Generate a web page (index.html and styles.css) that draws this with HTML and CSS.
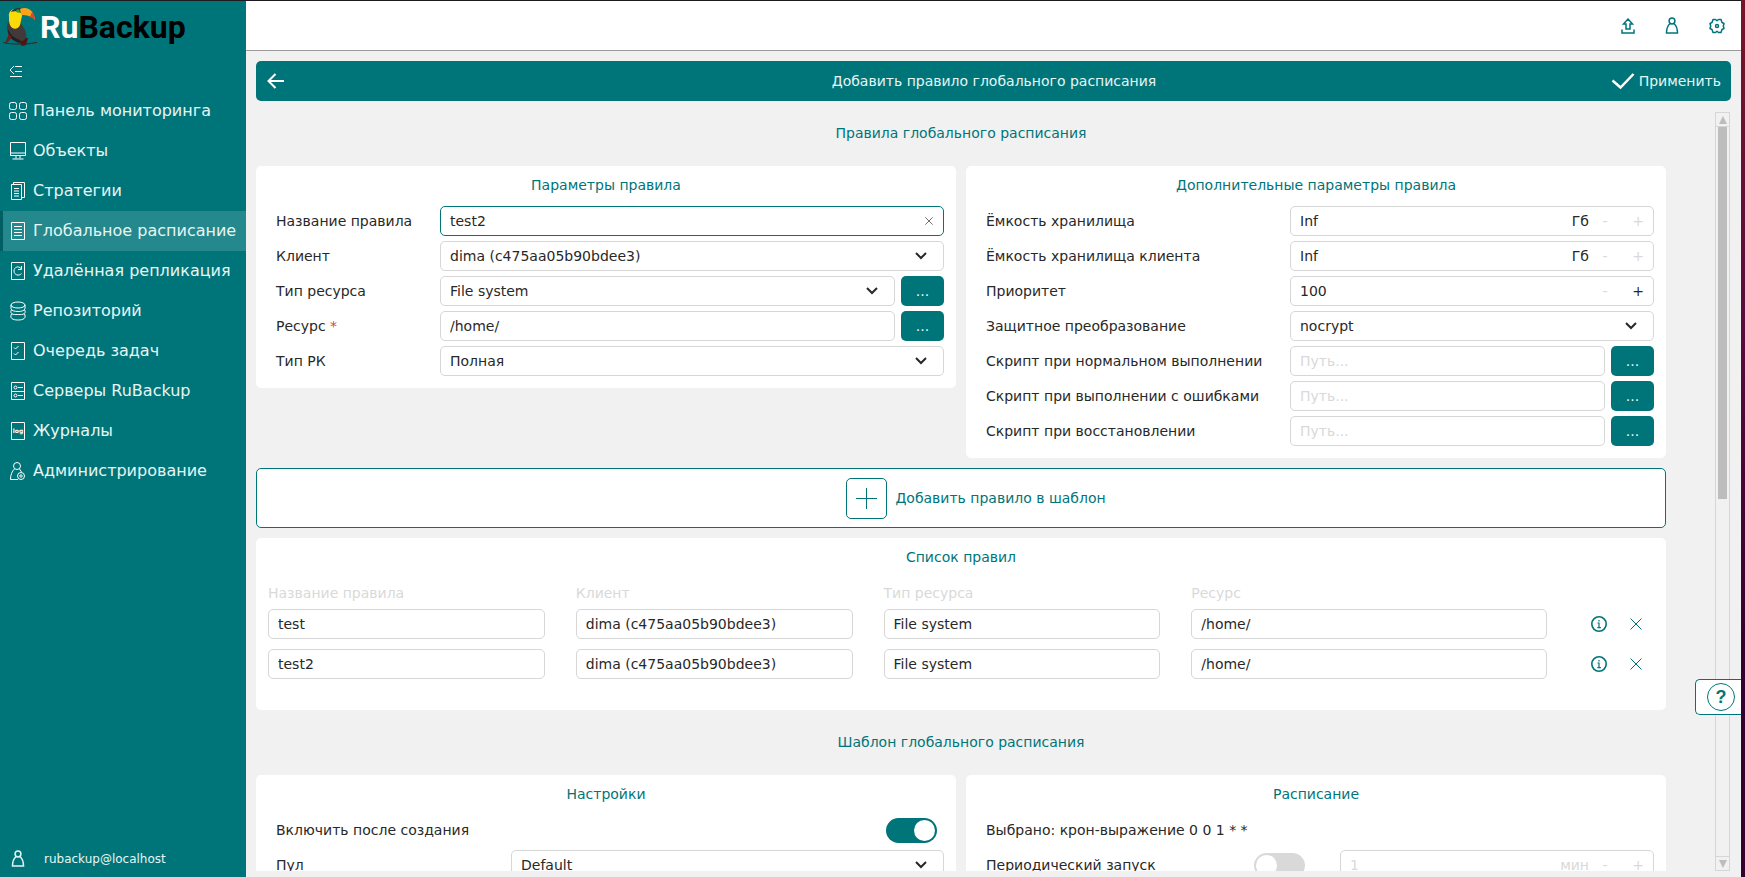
FILE: index.html
```html
<!DOCTYPE html>
<html lang="ru">
<head>
<meta charset="utf-8">
<title>RuBackup</title>
<link rel="stylesheet" href="styles.css">
</head>
<body>
<svg class="defs" width="0" height="0" aria-hidden="true">
  <symbol id="chevron" viewBox="0 0 12 8"><path d="M1 1l5 5 5-5" fill="none" stroke="currentColor" stroke-width="2"/></symbol>
  <symbol id="person" viewBox="0 0 14 18"><path d="M5 6.500C2.800 8.500 1.500 12 1.500 16h11c0-4-1.300-7.500-3.500-9.500" fill="none" stroke="currentColor" stroke-width="1.500"/><circle cx="7" cy="4" r="2.900" fill="none" stroke="currentColor" stroke-width="1.500"/></symbol>
  <symbol id="info" viewBox="0 0 16 16"><circle cx="8" cy="8" r="7.200" fill="none" stroke="currentColor" stroke-width="1.600"/><path d="M6.500 7H8v4.500M6.300 11.700h3.600M8 4v1.400" fill="none" stroke="currentColor" stroke-width="1.200"/></symbol>
  <symbol id="cross" viewBox="0 0 12 12"><path d="M.5.5l11 11M11.500.5l-11 11" fill="none" stroke="currentColor"/></symbol>
</svg>
<div class="app">
  <aside class="sidebar">
    <div class="logo">
      <svg class="toucan" width="34" height="40" viewBox="0 0 34 40" aria-hidden="true">
        <path d="M17 30l8 1-2 7-4 1-3-4z" fill="#4a1512"/>
        <path d="M5 15C3 21 4 29 10 33l10 1 3-3c1-6-2-10-5-14z" fill="#41393a"/>
        <path d="M5 22c2 6 6 9 12 11l-1 3C8 33 5 29 5 22z" fill="#221d20"/>
        <path d="M6 27L2 36l3-1 4-5z" fill="#6b1f15"/>
        <path d="M6 10c-1-6 4-9 9-8 4 1 5 4 4 7l-2 9c-2 5-8 5-10 0-1-2-1-5-1-8z" fill="#fcd908"/>
        <path d="M8 5c2-4 8-5 11-3l-1 4c-4-2-7-2-10-1z" fill="#29362c"/>
        <circle cx="15" cy="4" r="1.800" fill="#24a343"/>
        <path d="M17 2c7-3 14 1 15 11-4-4-8-5-14-5z" fill="#f9a31a"/>
        <path d="M29 5c2 2 3 5 3 8-2-2-4-3-5-3z" fill="#dc4527"/>
        <path d="M0 35c10 2 20 2 34 0v1c-12 2-24 2-34 0z" fill="#43201d"/>
      </svg>
      <span class="brand">Ru<span class="brand-dark">Backup</span></span>
    </div>
    <button class="collapse" type="button" aria-label="Свернуть меню">
      <svg width="14" height="14" viewBox="0 0 14 14" fill="none" stroke="currentColor"><path d="M5 2L1 6l4 4" stroke-width="1"/><path d="M6 2.500h7M6 7.500h7M1 12.500h12" stroke-width="1.200"/></svg>
    </button>
    <nav class="nav">
      <a class="nav-item" href="#"><svg width="20" height="20" viewBox="0 0 20 20"><rect x="1.500" y="1.500" width="7" height="7" rx="2"/><rect x="11.500" y="1.500" width="7" height="7" rx="2"/><rect x="1.500" y="11.500" width="7" height="7" rx="2"/><rect x="11.500" y="11.500" width="7" height="7" rx="2"/></svg>Панель мониторинга</a>
      <a class="nav-item" href="#"><svg width="20" height="20" viewBox="0 0 20 20"><path d="M2.500 1.500h15v13h-15zM2.500 12h15M8 14.500v3M12 14.500v3M4.500 18h11"/></svg>Объекты</a>
      <a class="nav-item" href="#"><svg width="20" height="20" viewBox="0 0 20 20"><path d="M3.500 3.500h10v15h-10zM5.500 3V1.500h11v15H14M6 7.500h5M6 10h5M6 12.500h5M6 15h5"/></svg>Стратегии</a>
      <a class="nav-item active" href="#" aria-current="page"><svg width="20" height="20" viewBox="0 0 20 20"><path d="M3.500 1.500h13v17h-13zM6 5.500h8M6 8.500h8M6 11.500h8M6 14.500h8"/></svg>Глобальное расписание</a>
      <a class="nav-item" href="#"><svg width="20" height="20" viewBox="0 0 20 20"><path d="M3.500 1.500h13v17h-13zM13 7.500c-2.500-3-7-1.500-7 2.500s5 5.500 7.500 2.500M13.500 5v3.500H10"/></svg>Удалённая репликация</a>
      <a class="nav-item" href="#"><svg width="20" height="20" viewBox="0 0 20 20"><ellipse cx="10" cy="4" rx="7" ry="3"/><path d="M3 4v3.500c0 4 14 4 14 0V4M3.500 8.500c-3 6 5 5 6.500 5s9.500 1 6.500-5M3.500 13c-3 6 5 6 6.500 6s9.500 0 6.500-6"/></svg>Репозиторий</a>
      <a class="nav-item" href="#"><svg width="20" height="20" viewBox="0 0 20 20"><path d="M3.500 1.500h13v17h-13zM6 6.500l1.500 1.500L10.500 5M6 12.500L7.500 14l3-3"/></svg>Очередь задач</a>
      <a class="nav-item" href="#"><svg width="20" height="20" viewBox="0 0 20 20"><path d="M3.500 1.500h13v17h-13zM3.500 10.500h13M10 6.500h5M10 14.500h5"/><circle cx="7.500" cy="6.500" r="1.500"/><circle cx="7.500" cy="14.500" r="1.500"/></svg>Серверы RuBackup</a>
      <a class="nav-item" href="#"><svg width="20" height="20" viewBox="0 0 20 20"><path d="M3.500 1.500h13v17h-13z"/><text class="log-text" x="10" y="12" text-anchor="middle">log</text></svg>Журналы</a>
      <a class="nav-item" href="#"><svg width="20" height="20" viewBox="0 0 20 20"><circle cx="9" cy="5" r="3.500"/><path d="M6.500 8C4 10 2.500 14 2.500 18.500H10M11.500 8l2 3"/><circle cx="13" cy="15" r="3.500"/><circle cx="13" cy="15" r="1.200"/></svg>Администрирование</a>
    </nav>
    <div class="user"><svg width="14" height="18"><use href="#person"/></svg><span>rubackup@localhost</span></div>
  </aside>

  <div class="main">
    <header class="topbar">
      <button class="icon-btn" type="button" aria-label="Загрузить"><svg width="14" height="18" viewBox="0 0 14 18" fill="none" stroke="currentColor" stroke-width="1.500"><path d="M7 2l4.500 5H9v5H5V7H2.500zM1 12.500V16h12v-3.500"/></svg></button>
      <button class="icon-btn" type="button" aria-label="Профиль"><svg width="14" height="18"><use href="#person"/></svg></button>
      <button class="icon-btn" type="button" aria-label="Настройки"><svg width="16" height="18" viewBox="0 0 16 18" fill="none" stroke="currentColor" stroke-width="1.500" stroke-linejoin="round"><path d="M4 2.500h2.500L8 3.800l1.500-1.300H12l1 3 2 1-.7 2.500.7 2.500-2 1-1 3H9.500L8 14.200l-1.500 1.300H4l-1-3-2-1L1.700 9 1 6.500l2-1z"/><circle cx="8" cy="9" r="1.500"/></svg></button>
    </header>

    <div class="workspace">
      <div class="actionbar">
        <button class="back" type="button" aria-label="Назад"><svg width="18" height="16" viewBox="0 0 18 16" fill="none" stroke="currentColor" stroke-width="2"><path d="M8.500 1L1.500 8l7 7M2 8h15"/></svg></button>
        <h1 class="title">Добавить правило глобального расписания</h1>
        <button class="apply" type="button"><svg width="24" height="18" viewBox="0 0 24 18" fill="none" stroke="currentColor" stroke-width="2.500"><path d="M1.500 8.500l8 7L22.500 2"/></svg>Применить</button>
      </div>

      <div class="scroller">
        <main class="content">
          <h2 class="heading">Правила глобального расписания</h2>
          <div class="cards">
            <section class="card">
              <h3 class="card-title">Параметры правила</h3>
              <div class="rows">
                <div class="row"><label for="name">Название правила</label>
                  <div class="field"><input class="box focused" id="name" type="text" value="test2"><button class="clear" type="button" aria-label="Очистить"><svg width="8" height="8" viewBox="0 0 12 12"><use href="#cross"/></svg></button></div></div>
                <div class="row"><label for="client">Клиент</label>
                  <div class="field"><select class="box" id="client"><option>dima (c475aa05b90bdee3)</option></select><svg class="chevron" width="12" height="8"><use href="#chevron"/></svg></div></div>
                <div class="row"><label for="rtype">Тип ресурса</label>
                  <div class="field"><select class="box" id="rtype"><option>File system</option></select><svg class="chevron" width="12" height="8"><use href="#chevron"/></svg></div><button class="more" type="button">...</button></div>
                <div class="row"><label for="resource">Ресурс <span class="required">*</span></label>
                  <div class="field"><input class="box" id="resource" type="text" value="/home/"></div><button class="more" type="button">...</button></div>
                <div class="row"><label for="btype">Тип РК</label>
                  <div class="field"><select class="box" id="btype"><option>Полная</option></select><svg class="chevron" width="12" height="8"><use href="#chevron"/></svg></div></div>
              </div>
            </section>
            <section class="card wide-labels">
              <h3 class="card-title">Дополнительные параметры правила</h3>
              <div class="rows">
                <div class="row"><label for="cap">Ёмкость хранилища</label>
                  <div class="field box spin"><input id="cap" type="text" value="Inf"><span>Гб</span><button type="button" disabled>-</button><button type="button" disabled>+</button></div></div>
                <div class="row"><label for="ccap">Ёмкость хранилища клиента</label>
                  <div class="field box spin"><input id="ccap" type="text" value="Inf"><span>Гб</span><button type="button" disabled>-</button><button type="button" disabled>+</button></div></div>
                <div class="row"><label for="prio">Приоритет</label>
                  <div class="field box spin"><input id="prio" type="text" value="100"><button type="button" disabled>-</button><button type="button">+</button></div></div>
                <div class="row"><label for="crypt">Защитное преобразование</label>
                  <div class="field"><select class="box" id="crypt"><option>nocrypt</option></select><svg class="chevron" width="12" height="8"><use href="#chevron"/></svg></div></div>
                <div class="row"><label for="s1">Скрипт при нормальном выполнении</label>
                  <div class="field"><input class="box" id="s1" type="text" placeholder="Путь..."></div><button class="more" type="button">...</button></div>
                <div class="row"><label for="s2">Скрипт при выполнении с ошибками</label>
                  <div class="field"><input class="box" id="s2" type="text" placeholder="Путь..."></div><button class="more" type="button">...</button></div>
                <div class="row"><label for="s3">Скрипт при восстановлении</label>
                  <div class="field"><input class="box" id="s3" type="text" placeholder="Путь..."></div><button class="more" type="button">...</button></div>
              </div>
            </section>
          </div>

          <button class="add-rule" type="button"><span class="plus"><svg width="21" height="21" viewBox="0 0 21 21" stroke="currentColor"><path d="M10.500 0v21M0 10.500h21"/></svg></span>Добавить правило в шаблон</button>

          <section class="card list">
            <h3 class="card-title" id="rules">Список правил</h3>
            <table class="rules" aria-labelledby="rules">
              <thead><tr><th>Название правила</th><th>Клиент</th><th>Тип ресурса</th><th>Ресурс</th></tr></thead>
              <tbody>
                <tr>
                  <td><input class="box" type="text" aria-label="Название правила" value="test"></td>
                  <td><input class="box" type="text" aria-label="Клиент" value="dima (c475aa05b90bdee3)"></td>
                  <td><input class="box" type="text" aria-label="Тип ресурса" value="File system"></td>
                  <td><input class="box" type="text" aria-label="Ресурс" value="/home/"></td>
                  <td class="tools"><button class="icon-btn" type="button" aria-label="Информация"><svg width="16" height="16"><use href="#info"/></svg></button><button class="icon-btn" type="button" aria-label="Удалить"><svg width="12" height="12"><use href="#cross"/></svg></button></td>
                </tr>
                <tr>
                  <td><input class="box" type="text" aria-label="Название правила" value="test2"></td>
                  <td><input class="box" type="text" aria-label="Клиент" value="dima (c475aa05b90bdee3)"></td>
                  <td><input class="box" type="text" aria-label="Тип ресурса" value="File system"></td>
                  <td><input class="box" type="text" aria-label="Ресурс" value="/home/"></td>
                  <td class="tools"><button class="icon-btn" type="button" aria-label="Информация"><svg width="16" height="16"><use href="#info"/></svg></button><button class="icon-btn" type="button" aria-label="Удалить"><svg width="12" height="12"><use href="#cross"/></svg></button></td>
                </tr>
              </tbody>
            </table>
          </section>

          <h2 class="heading">Шаблон глобального расписания</h2>
          <div class="cards">
            <section class="card pool">
              <h3 class="card-title">Настройки</h3>
              <div class="rows">
                <div class="row"><label for="enable">Включить после создания</label><div class="field end"><input class="toggle" id="enable" type="checkbox" role="switch" checked></div></div>
                <div class="row"><label for="pool">Пул</label>
                  <div class="field"><select class="box" id="pool"><option>Default</option></select><svg class="chevron" width="12" height="8"><use href="#chevron"/></svg></div></div>
              </div>
            </section>
            <section class="card period">
              <h3 class="card-title">Расписание</h3>
              <div class="rows">
                <p class="row">Выбрано: крон-выражение 0 0 1 * *</p>
                <div class="row"><label for="periodic">Периодический запуск</label><input class="toggle" id="periodic" type="checkbox" role="switch">
                  <div class="field box spin off"><input type="text" aria-label="Период" value="1" disabled><span>мин</span><button type="button" disabled>-</button><button type="button" disabled>+</button></div></div>
              </div>
            </section>
          </div>
        </main>
        <div class="scrollbar" aria-hidden="true">
          <div class="arrow"><svg width="8" height="8"><path d="M4 0l4 8H0z"/></svg></div>
          <div class="track"><div class="thumb"></div></div>
          <div class="arrow"><svg width="8" height="8"><path d="M4 8L0 0h8z"/></svg></div>
        </div>
      </div>
    </div>
    <button class="help" type="button" aria-label="Справка"><span class="help-ring">?</span></button>
  </div>
</div>
</body>
</html>
```

FILE: styles.css
```css
* { box-sizing: border-box; }

:root {
  --teal: #007579;
  --ink: #282828;
  --line: #d6d6d6;
  --muted: #d9d9d9;
  --bg: #f1f1f1;
}

body {
  margin: 0;
  background: linear-gradient(#7a1428, #5c0c3c 35%, #33002f 75%);
  color: var(--ink);
  font: 14px/20px "DejaVu Sans", sans-serif;
}

button, input, select { font: inherit; color: inherit; }
button { padding: 0; border: 0; background: none; }
svg { display: block; flex: none; }
h1, h2, h3, p { margin: 0; font-size: 14px; font-weight: 400; }
.defs { position: absolute; }

.app {
  display: flex;
  height: 100vh;
  margin-right: 4px;
  border-top: 1px solid #1b1b20;
  background: var(--bg);
}

/* Sidebar */
.sidebar {
  display: flex;
  flex: none;
  flex-direction: column;
  width: 246px;
  background: var(--teal);
  color: #e6f6f5;
}
.logo { display: flex; align-items: center; gap: 3px; height: 50px; padding: 2px 3px 0; }
.brand { color: #fff; font: 700 32px/40px Roboto, sans-serif; }
.brand-dark { color: #000; }
.collapse { width: 14px; margin: 13px 9px; color: #fff; }
.nav-item {
  display: flex;
  align-items: center;
  gap: 5px;
  height: 40px;
  padding-left: 5px;
  border-left: 3px solid transparent;
  color: inherit;
  font-size: 16px;
  text-decoration: none;
  white-space: nowrap;
}
.nav-item svg { fill: none; stroke: #fff; }
.nav-item.active { border-color: #005f64; background: #24888c; }
.nav-item .log-text { fill: #fff; stroke: none; font: 700 6px "DejaVu Sans", sans-serif; }
.user { display: flex; align-items: center; gap: 19px; margin-top: auto; padding: 8px 11px; font-size: 12px; }

/* Top bar */
.main { position: relative; display: flex; flex: 1; flex-direction: column; min-width: 0; }
.topbar {
  display: flex;
  align-items: center;
  justify-content: flex-end;
  gap: 30px;
  height: 50px;
  flex: none;
  padding-right: 16px;
  border-bottom: 1px solid #9c9c9c;
  background: #fff;
  color: var(--teal);
}
.icon-btn { color: var(--teal); }
.workspace { display: flex; flex: 1; flex-direction: column; gap: 10px; min-height: 0; padding: 10px 10px 6px; }
.actionbar {
  display: grid;
  grid-template-columns: 1fr auto 1fr;
  align-items: center;
  height: 40px;
  flex: none;
  padding: 0 10px 0 11px;
  border-radius: 5px;
  background: var(--teal);
  color: #e6f6f5;
}
.back { justify-self: start; color: #fff; }
.apply { display: flex; align-items: center; justify-self: end; gap: 4px; }
.apply svg { color: #fff; }

/* Scrolling content */
.scroller { display: flex; flex: 1; gap: 49px; min-height: 0; }
.content { flex: 1; min-width: 0; overflow-y: auto; scrollbar-width: none; }
.heading { padding: 12px 0 23px; color: var(--teal); text-align: center; }
.card + .heading { padding-top: 22px; }
.cards { display: grid; grid-template-columns: 1fr 1fr; align-items: start; gap: 10px; }
.card { padding: 9px 12px 12px 20px; border-radius: 5px; background: #fff; }
.card-title { margin: 0 8px 11px 0; color: var(--teal); text-align: center; }
.rows { display: grid; gap: 5px; }
.row { display: flex; align-items: center; gap: 6px; min-height: 30px; }
.row label { flex: none; width: 158px; white-space: nowrap; }
.wide-labels label { width: 298px; }
.pool label { width: 229px; }
.period label { width: 262px; }
.required { color: #d04a35; }

.field { position: relative; display: flex; flex: 1; min-width: 0; }
.end { justify-content: flex-end; padding-right: 7px; }
.box {
  width: 100%;
  min-width: 0;
  height: 30px;
  padding: 0 9px;
  border: 1px solid var(--line);
  border-radius: 5px;
  outline: 0;
  background: #fff;
  color: var(--ink);
}
.focused { border-color: var(--teal); }
select.box { appearance: none; }
.chevron { position: absolute; right: 17px; top: 11px; color: var(--ink); pointer-events: none; }
.clear { position: absolute; right: 11px; top: 11px; }
::placeholder { color: var(--muted); opacity: 1; }

.spin { align-items: center; }
.spin input { flex: 1; width: 0; padding: 0; border: 0; outline: 0; background: none; }
.spin button { width: 12px; margin-left: 10px; }
.spin button + button { margin-left: 21px; }
.spin button:disabled, .off { color: var(--muted); }

.more { width: 43px; height: 30px; border-radius: 5px; background: var(--teal); color: #e6f6f5; }

.toggle {
  appearance: none;
  flex: none;
  width: 51px;
  height: 25px;
  margin: 0;
  padding: 2px;
  border-radius: 13px;
  background: var(--muted);
}
.toggle::before { content: ""; display: block; width: 21px; height: 21px; border-radius: 50%; background: #fff; }
.toggle:checked { background: var(--teal); }
.toggle:checked::before { margin-left: auto; }
.period .field { margin-left: 29px; }

.add-rule {
  display: flex;
  align-items: center;
  justify-content: center;
  gap: 8px;
  width: 100%;
  height: 60px;
  margin: 10px 0;
  padding-left: 30px;
  border: 1px solid var(--teal);
  border-radius: 5px;
  background: #fff;
  color: var(--teal);
}
.plus { display: grid; place-items: center; width: 41px; height: 41px; border: 1px solid var(--teal); border-radius: 5px; }

/* Rule list */
.list { padding: 9px 12px 31px; }
.list .card-title { margin: 0 0 16px; }
.rules, .rules tbody, .rules thead { display: block; }
.rules tr { display: grid; grid-template-columns: 277fr 277fr 277fr 356fr 76px; column-gap: 31px; margin-bottom: 10px; }
.rules thead tr { margin-bottom: 6px; }
.rules tbody tr:last-child { margin-bottom: 0; }
.rules th { padding: 0; color: var(--muted); font-weight: 400; text-align: left; }
.rules td { padding: 0; }
.rules .tools { display: flex; align-items: center; justify-content: flex-end; gap: 23px; padding-right: 12px; }

/* Scrollbar */
.scrollbar { display: flex; flex-direction: column; flex: none; width: 15px; margin: 1px 1px 0 0; }
.arrow { display: grid; place-items: center; height: 15px; border: 1px solid var(--line); fill: #bdbdbd; }
.track { flex: 1; padding: 0 2px; border: solid var(--line); border-width: 0 1px; }
.thumb { height: 51%; background: #bdbdbd; }

/* Help tab */
.help {
  position: absolute;
  right: 0;
  bottom: 162px;
  display: flex;
  align-items: center;
  width: 46px;
  height: 36px;
  padding-left: 11px;
  border: 1px solid var(--teal);
  border-right: 0;
  border-radius: 5px 0 0 5px;
  background: #fff;
  color: var(--teal);
}
.help-ring { display: grid; place-items: center; width: 28px; height: 28px; border: 1px solid; border-radius: 50%; font: 700 18px/20px "Liberation Sans", sans-serif; }
```
